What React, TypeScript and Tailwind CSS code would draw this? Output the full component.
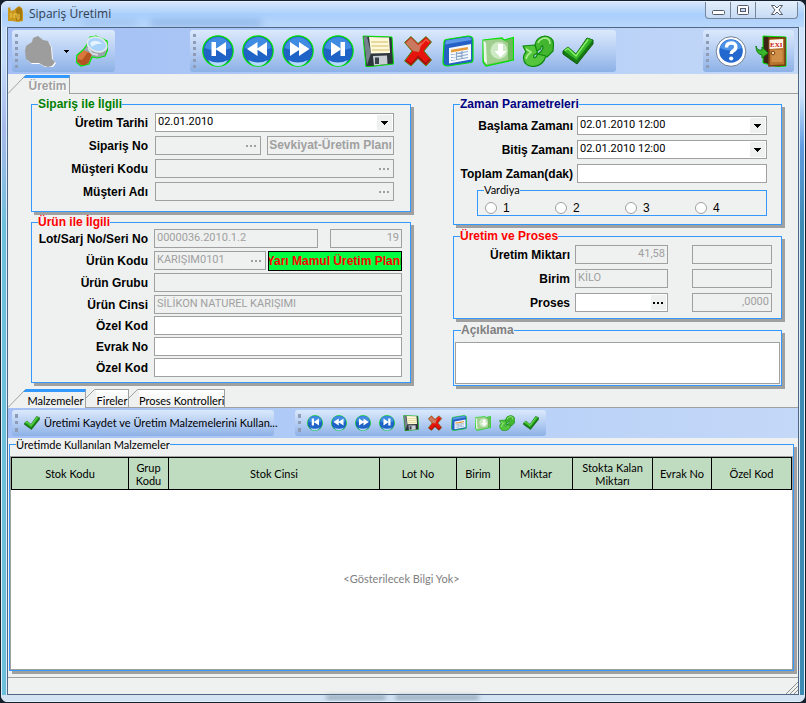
import React from 'react';

type IconProps = { className?: string };

const GREEN = '#00e400';

/* ---------- Icons ---------- */

const NavIcon: React.FC<IconProps & { kind: 'first' | 'prev' | 'next' | 'last' }> = ({ kind, className }) => (
  <svg viewBox="0 0 32 32" className={className} aria-hidden="true">
    <circle cx="16" cy="16" r="15.2" fill="#1b5bbf" stroke={GREEN} strokeWidth="1.2" />
    <circle cx="16" cy="16" r="14" fill="#1f63c6" />
    <path d="M2.5 13A13.8 13.8 0 0 1 29.500 13Q16 18 2.500 13Z" fill="#3f8ce2" />
    <path d="M6 25Q16 30 26 25Q22 31 16 31T6 25Z" fill="#b4dafa" />
    <g fill="#fff">
      {kind === 'first' && <path d="M9.500 7h4.500v14H9.500zM24 7v14L13.500 14z" />}
      {kind === 'prev' && <path d="M15.500 7v14L5 14zM25 7v14L14.500 14z" />}
      {kind === 'next' && <path d="M8 7v14L18.500 14zM17 7v14L27.500 14z" />}
      {kind === 'last' && <path d="M18.500 7h4.500v14h-4.500zM9 7v14L19.500 14z" />}
    </g>
  </svg>
);

const SaveIcon: React.FC<IconProps> = ({ className }) => (
  <svg viewBox="0 0 32 32" className={className} aria-hidden="true">
    <path d="M1 1L30 2L31.500 29L4 32Z" fill="#2f353d" stroke={GREEN} strokeWidth="1" />
    <path d="M1.500 1.500L5 1.500L9 18L5 30Z" fill="#76808c" />
    <path d="M7 2L27 2.500L28 18L9 18.500Z" fill="#fdf9d8" />
    <path d="M9 7h17M9.500 11h17M10 15h17" stroke="#e0cf8e" strokeWidth="1.300" />
    <path d="M11 21L25 20.500L25.500 29L12 30.500Z" fill="#c9ced4" />
    <path d="M13 22.500h4v6.500h-4z" fill="#39414b" />
  </svg>
);

const DeleteIcon: React.FC<IconProps> = ({ className }) => (
  <svg viewBox="0 0 32 32" className={className} aria-hidden="true">
    <path d="M2.500 7.500L9 1.500L16 8.500L24 1.500L29.500 7L22 16L29.500 25L24 31L16 23.500L9 31L2.500 26L10 16Z" fill="#e5140c" stroke="#4a8a1a" strokeWidth="1" />
    <path d="M3.500 8L9 3L16 10L20 7L17 17L11 16Z" fill="#c97a5e" />
    <path d="M16 23L23.500 30L28.500 25L27.500 23.500L23.500 27.500L16 20.500L9 28.500L4.500 25L3.500 26L9 30Z" fill="#a5100b" />
    <path d="M17 12L24 4.500L27 7" stroke="#f0604c" strokeWidth="1.200" fill="none" />
  </svg>
);

const FormIcon: React.FC<IconProps> = ({ className }) => (
  <svg viewBox="0 0 32 32" className={className} aria-hidden="true">
    <path d="M2 7Q2 5 4 4.500L26 1Q31 1 31 5V25Q31 27 29 27.500L6 31Q1 31 1 27Z" fill="#2560c4" stroke={GREEN} strokeWidth="1.200" />
    <path d="M4 5.500L26 2Q29 2 29.500 5L3 9.500Z" fill="#5b98ea" />
    <path d="M7 13L29 9V24.500L7 28.500Z" fill="#f4f9ff" />
    <path d="M9 14.800L26 12V14.500L9 17.500Z" fill="#e79c3c" />
    <path d="M9 19.500L26 16.500M9 22.500L26 19.500M9 25.500L26 22.500M14.500 17v8M20 16v8" stroke="#8ba6c9" strokeWidth="1.200" fill="none" />
  </svg>
);

const ImportIcon: React.FC<IconProps> = ({ className }) => (
  <svg viewBox="0 0 32 32" className={className} aria-hidden="true">
    <path d="M1 5L20 3L22 5L31.500 2.500V25L4 31L1 27Z" fill="#6db85a" stroke={GREEN} strokeWidth="1.200" />
    <path d="M1.500 5.500L19 4L26 8L26 25L5 29.500L2 26Z" fill="#a0cf90" />
    <path d="M1.500 5.500L4 8L5 29.500L2 26Z" fill="#e9f7e4" />
    <circle cx="17" cy="15.500" r="8.500" fill="#cdeac4" />
    <path d="M16 9h5v7h3.500L18.500 22.500L12.500 16H16z" fill="#fff" />
  </svg>
);

const RefreshIcon: React.FC<IconProps> = ({ className }) => (
  <svg viewBox="0 0 32 32" className={className} aria-hidden="true">
    <g stroke="#0c8a0c" strokeWidth="1.200" strokeLinejoin="round">
      <path d="M13 10Q14 2 23 1Q32 2 31.500 10L31 16L25 22L15 20L19 16.500Q22 13 20.500 10.500Q19 11 18.500 14L13 17Z" fill="#43b52f" />
      <path d="M1 11L13 10L15.500 18L12 20Q11 22 12.500 23Q15 22 15.500 19L24 21Q21 31 11 31.500Q2 31 1.500 23Q1 20 4 17Z" fill="#55c53d" />
    </g>
    <path d="M16 8Q18 3 24 3Q28 4 28 9M4 24Q5 20 9 17L4 14" stroke="#a7ee8d" strokeWidth="1.600" fill="none" />
  </svg>
);

const CheckIcon: React.FC<IconProps> = ({ className }) => (
  <svg viewBox="0 0 32 32" className={className} aria-hidden="true">
    <path d="M1 16L6 12L14 19L25 3L31 5V9L15 29L1 19Z" fill="#167914" stroke="#0b5c0a" strokeWidth="1" />
    <path d="M1.500 15.500L6 12L14 19L25.500 3L30.500 5L14.500 25Z" fill="#35b428" />
    <path d="M3 15.500L6 13.500L14 21L26 4.500" stroke="#8df06d" strokeWidth="1.300" fill="none" />
  </svg>
);

const HelpIcon: React.FC<IconProps> = ({ className }) => (
  <svg viewBox="0 0 32 32" className={className} aria-hidden="true">
    <circle cx="16" cy="16.500" r="14.800" fill="#fff" stroke="#6f7e91" strokeWidth="1" />
    <circle cx="16" cy="16" r="11.800" fill="#2368cf" />
    <path d="M5 13A11.500 11.500 0 0 1 27 13Q16 18 5 13Z" fill="#4f93e8" />
    <path d="M11.500 12.500Q11.500 8 16.200 8T20.800 12Q20.800 14.500 18 16Q16.200 17 16.200 19" stroke="#fff" strokeWidth="3.400" fill="none" />
    <circle cx="16.200" cy="23.500" r="2.100" fill="#fff" />
  </svg>
);

const ExitIcon: React.FC<IconProps> = ({ className }) => (
  <svg viewBox="0 0 32 32" className={className} aria-hidden="true">
    <path d="M8 1L31 2V31L23 32L8 28Z" fill="#3d2417" stroke={GREEN} strokeWidth="1" />
    <path d="M14 3L30 3V30L14 31Z" fill="#b8742f" stroke="#7d3f15" strokeWidth="1.500" />
    <path d="M16.500 15h11v12h-11z" fill="#cf8f48" />
    <path d="M14.500 5L28 4V13L14.500 14Z" fill="#fff6ee" />
    <text x="15" y="12" fontSize="7" fontWeight="bold" fill="#c91818" fontFamily="Liberation Serif, serif">EXI</text>
    <circle cx="18" cy="18" r="1.800" fill="#f5d9a0" stroke="#7d3f15" />
    <path d="M1 11Q2 16 7 15V12L13 18L7 23V20Q1 19 1 11Z" fill="#3bb52a" stroke="#0d800d" />
  </svg>
);

const SearchIcon: React.FC<IconProps> = ({ className }) => (
  <svg viewBox="0 0 32 32" className={className} aria-hidden="true">
    <path d="M10 11L14 2L20 1L31 6L32 14L29 21L22 23L16 22L13 29L5 31L0 27L1 20L7 15Z" fill="#9aa4ac" stroke={GREEN} strokeWidth="1.200" />
    <path d="M8 15.500L16 19L12.500 28L9 30H5L1 26.500L2 20.500Z" fill="#b4541f" />
    <path d="M8 15.500L12 17L6 25L2 24L2 20.500Z" fill="#d9783a" />
    <ellipse cx="21" cy="9.500" rx="10" ry="7" transform="rotate(18 21 9.500)" fill="#a9d3fa" stroke="#e4e9ed" strokeWidth="1.600" />
    <path d="M14 8Q19 3 27 9Q20 8 16 12Z" fill="#e4f3ff" />
    <path d="M12 13L16 18.500L22 20" stroke="#d5dade" strokeWidth="2" fill="none" />
  </svg>
);

const BlobIcon: React.FC<IconProps> = ({ className }) => (
  <svg viewBox="0 0 32 32" className={className} aria-hidden="true">
    <path d="M9 3L14 1L19 5L24 6L27 12L28 24L31 27L28 31L24 32L20 31L15 28L7 28L2 24L1 16L2 11L8 7Z" transform="translate(1 1)" fill="#fff" />
    <path d="M9 3L14 1L19 5L24 6L27 12L28 24L31 27L28 31L24 32L20 31L15 28L7 28L2 24L1 16L2 11L8 7Z" fill="#9d9d9d" />
  </svg>
);

const AppIcon: React.FC<IconProps> = ({ className }) => (
  <svg viewBox="0 0 16 16" className={className} aria-hidden="true">
    <path d="M0 2L2 1L3 5L6 4L8 2L11 0L14 2L15 6L15 15L10 16L4 15L0 15Z" fill="#c9981d" />
    <path d="M8 3L11 1L14 3V14L8 15Z" fill="#a8790f" />
    <path d="M3 7v5M6 8v4M6 8h3v4M11 8v5h-2" stroke="#f0cf55" fill="none" />
  </svg>
);

const recordIcons: { label: string; render: (cls: string) => React.ReactNode }[] = [
  { label: 'İlk', render: (c) => <NavIcon kind="first" className={c} /> },
  { label: 'Önceki', render: (c) => <NavIcon kind="prev" className={c} /> },
  { label: 'Sonraki', render: (c) => <NavIcon kind="next" className={c} /> },
  { label: 'Son', render: (c) => <NavIcon kind="last" className={c} /> },
  { label: 'Kaydet', render: (c) => <SaveIcon className={c} /> },
  { label: 'Sil', render: (c) => <DeleteIcon className={c} /> },
  { label: 'Form', render: (c) => <FormIcon className={c} /> },
  { label: 'Aktar', render: (c) => <ImportIcon className={c} /> },
  { label: 'Yenile', render: (c) => <RefreshIcon className={c} /> },
  { label: 'Onayla', render: (c) => <CheckIcon className={c} /> },
];

/* ---------- Shared pieces ---------- */

const Grip: React.FC = () => (
  <span className="w-[3px] self-stretch my-1 border-l-[3px] border-dotted border-[#8e9db5] shrink-0" />
);

const ToolGroup: React.FC<{ children: React.ReactNode; className: string }> = ({ children, className }) => (
  <div className={`flex items-center rounded-[3px] bg-linear-to-b from-[#dbe9fb] via-[#b6cef3] to-[#8db1e6] ${className}`}>
    <Grip />
    {children}
  </div>
);

const Group: React.FC<{ title: string; color: string; className: string; children: React.ReactNode }> = ({
  title,
  color,
  className,
  children,
}) => (
  <fieldset className={`min-w-0 border border-solid border-[#3399ff] bg-[#eff1f0] shadow-[3px_3px_0_#a0a0a0] ${className}`}>
    <legend className={`ml-[6px] h-[14px] leading-[14px] text-[12px] font-bold ${color}`}>{title}</legend>
    {children}
  </fieldset>
);

const Row: React.FC<{ id: string; label: string; labelClass: string; children: React.ReactNode }> = ({
  id,
  label,
  labelClass,
  children,
}) => (
  <div className="flex h-[19px] items-center">
    <label htmlFor={id} className={`shrink-0 text-right text-[12px] font-bold whitespace-nowrap ${labelClass}`}>
      {label}
    </label>
    {children}
  </div>
);

const box =
  "h-[19px] min-w-0 border border-[#a0a0a0] font-['Roboto',sans-serif] text-[11px] leading-[14px] px-[2px] pb-[2px] rounded-none";

const Field: React.FC<{ id?: string; label?: string; value?: string; disabled?: boolean; className: string }> = ({
  id,
  label,
  value,
  disabled,
  className,
}) => (
  <input
    id={id}
    aria-label={label}
    type="text"
    defaultValue={value}
    disabled={disabled}
    className={`${box} bg-white disabled:bg-[#eff1f0] disabled:text-[#a0a0a0] ${className}`}
  />
);

const LookupField: React.FC<{ id: string; value?: string; disabled?: boolean; className: string }> = ({
  id,
  value,
  disabled,
  className,
}) => (
  <div className={`flex h-[19px] min-w-0 border border-[#a0a0a0] ${disabled ? 'bg-[#eff1f0]' : 'bg-white'} ${className}`}>
    <input
      id={id}
      type="text"
      defaultValue={value}
      disabled={disabled}
      className="min-w-0 flex-1 px-[2px] pb-[2px] font-['Roboto',sans-serif] text-[11px] leading-[14px] disabled:text-[#a0a0a0]"
    />
    <button type="button" disabled={disabled} aria-label="Seç" className="m-px w-[15px] bg-[#eff1f0] text-black disabled:text-[#a0a0a0]">
      <svg viewBox="0 0 15 15" className="h-[15px] w-[15px]" fill="currentColor" shapeRendering="crispEdges">
        <path d="M2 7h2v2h-2zM6 7h2v2h-2zM10 7h2v2h-2z" />
      </svg>
    </button>
  </div>
);

const DateSelect: React.FC<{ id: string; value: string }> = ({ id, value }) => (
  <div className="relative flex-1 min-w-0">
    <select id={id} className={`${box} block w-full appearance-none bg-white`}>
      <option>{value}</option>
    </select>
    <svg viewBox="0 0 15 15" className="pointer-events-none absolute top-[2px] right-[2px] h-[15px] w-[15px] bg-[#eff1f0]" shapeRendering="crispEdges">
      <path d="M4 6h7v1h-1v1h-1v1h-1v1h-1v-1h-1v-1h-1v-1h-1z" />
    </svg>
  </div>
);

const Tab: React.FC<{ label: string; active?: boolean; muted?: boolean; className: string }> = ({
  label,
  active,
  muted,
  className,
}) => (
  <button type="button" role="tab" aria-selected={!!active} className="flex items-end whitespace-nowrap">
    <svg viewBox={active ? '0 0 18 19' : '0 0 10 19'} className={active ? 'h-[19px] w-[18px]' : 'h-[19px] w-[10px]'}>
      {active ? (
        <>
          <path d="M0 19L18 0V19Z" fill="#eff1f0" />
          <path d="M0 18.500L17.500 .5H18" stroke="#a0a0a0" fill="none" />
          <path d="M15 3L18 0V3Z" fill="#3399ff" />
        </>
      ) : (
        <path d="M0 9L8.500 .5H10M0 18.500H10" stroke="#a0a0a0" fill="none" />
      )}
    </svg>
    <span
      className={`h-[19px] border-r border-[#a0a0a0] text-center ${
        active ? 'border-t-[3px] border-t-[#3399ff] pt-px' : 'border-t border-b bg-linear-to-b from-white to-[#eff1f0] pt-[3px]'
      } ${muted ? 'text-[12px] font-bold text-[#a0a0a0] [text-shadow:1px_1px_0_#fff]' : "font-['Lato',sans-serif] text-[11px]"} leading-[15px] ${className}`}
    >
      {label}
    </span>
  </button>
);

const columns = [
  { title: 'Stok Kodu', width: 'w-[117px]' },
  { title: 'Grup Kodu', width: 'w-[40px]' },
  { title: 'Stok Cinsi', width: '' },
  { title: 'Lot No', width: 'w-[77px]' },
  { title: 'Birim', width: 'w-[43px]' },
  { title: 'Miktar', width: 'w-[73px]' },
  { title: 'Stokta Kalan Miktarı', width: 'w-[80px]' },
  { title: 'Evrak No', width: 'w-[59px]' },
  { title: 'Özel Kod', width: 'w-[80px]' },
];

/* ---------- Window parts ---------- */

const TitleBar: React.FC = () => (
  <header className="relative flex h-[25px] items-start justify-between overflow-hidden pl-[6px]">
    <div className="absolute top-[17px] left-[80px] h-2 w-14 rounded-full bg-[#6e95cf]/20 blur-[3px]" />
    <div className="absolute top-[17px] left-[148px] h-2 w-28 rounded-full bg-[#6e95cf]/40 blur-[3px]" />
    <div className="flex items-center gap-[5px] pt-[4px]">
      <AppIcon className="h-4 w-4" />
      <h1 className="font-['Open_Sans',sans-serif] text-[12px] leading-[16px] text-[#333d4d]">Sipariş Üretimi</h1>
    </div>
    <div className="mr-[6px] flex h-[17px] rounded-b-[4px] border border-t-0 border-[#75859c] bg-linear-to-b from-[#e3eefb] to-[#c6dbf5]">
      <button type="button" aria-label="Simge durumuna küçült" className="flex w-[25px] items-center justify-center border-r border-[#75859c]">
        <svg viewBox="0 0 13 12" className="h-3 w-[13px]"><rect x=".5" y="6.500" width="12" height="4" rx="1" fill="#fff" stroke="#555c68" /></svg>
      </button>
      <button type="button" aria-label="Ekranı kapla" className="flex w-[25px] items-center justify-center border-r border-[#75859c]">
        <svg viewBox="0 0 12 10" className="h-[10px] w-3"><rect x=".5" y=".5" width="11" height="9" rx="1" fill="#fff" stroke="#555c68" /><rect x="3.500" y="3.500" width="5" height="3" fill="#c9dcf4" stroke="#555c68" /></svg>
      </button>
      <button type="button" aria-label="Kapat" className="flex w-[41px] items-center justify-center">
        <svg viewBox="0 0 12 10" className="h-[10px] w-3"><path d="M.5.5h3L6 3L8.500.5h3L8 5L11.500 9.500h-3L6 7L3.500 9.500h-3L4 5Z" fill="#fff" stroke="#555c68" /></svg>
      </button>
    </div>
  </header>
);

const MainToolbar: React.FC = () => (
  <div className="flex h-[46px] items-center bg-linear-to-r from-[#a3bff5] via-[#b0ccf7] to-[#c4d8f8] px-1">
    <ToolGroup className="h-[42px] w-[103px] pl-[3px]">
      <button type="button" disabled aria-label="Yazdır" className="ml-[6px]">
        <BlobIcon className="h-8 w-8" />
      </button>
      <button type="button" aria-label="Seçenekler" className="ml-2 w-[5px]">
        <svg viewBox="0 0 5 3" className="h-[3px] w-[5px]" shapeRendering="crispEdges"><path d="M0 0h5v1h-1v1h-1v1h-1v-1h-1v-1h-1z" /></svg>
      </button>
      <button type="button" aria-label="Ara" className="ml-[7px]">
        <SearchIcon className="h-8 w-8" />
      </button>
    </ToolGroup>
    <ToolGroup className="ml-[75px] h-[42px] w-[426px] pl-[3px]">
      <div className="ml-[6px] flex gap-2">
        {recordIcons.map((item) => (
          <button key={item.label} type="button" aria-label={item.label}>
            {item.render('h-8 w-8')}
          </button>
        ))}
      </div>
    </ToolGroup>
    <ToolGroup className="ml-auto h-[42px] w-[91px] pl-[3px]">
      <div className="ml-[6px] flex gap-2">
        <button type="button" aria-label="Yardım"><HelpIcon className="h-8 w-8" /></button>
        <button type="button" aria-label="Çıkış"><ExitIcon className="h-8 w-8" /></button>
      </div>
    </ToolGroup>
  </div>
);

const OrderForm: React.FC = () => (
  <form className="grid grid-cols-[minmax(0,380fr)_minmax(0,329fr)] items-start gap-x-[42px] pt-[3px] pr-4 pb-[2px] pl-[23px]">
    <div className="flex flex-col gap-[3px]">
      <Group title="Sipariş ile İlgili" color="text-[#008000]" className="pr-4 pb-[10px]">
        <div className="flex flex-col gap-1 pt-[2px]">
          <Row id="tarih" label="Üretim Tarihi" labelClass="w-[116px] mr-[7px]">
            <DateSelect id="tarih" value="02.01.2010" />
          </Row>
          <Row id="siparis" label="Sipariş No" labelClass="w-[116px] mr-[7px]">
            <LookupField id="siparis" disabled className="mr-[6px] flex-1" />
            <button type="button" disabled className="h-[19px] w-[127px] overflow-hidden border border-[#a0a0a0] text-[12px] leading-[17px] font-bold whitespace-nowrap text-[#a0a0a0]">
              Sevkiyat-Üretim Planı
            </button>
          </Row>
          <Row id="musteriKodu" label="Müşteri Kodu" labelClass="w-[116px] mr-[7px]">
            <LookupField id="musteriKodu" disabled className="flex-1" />
          </Row>
          <Row id="musteriAdi" label="Müşteri Adı" labelClass="w-[116px] mr-[7px]">
            <LookupField id="musteriAdi" disabled className="flex-1" />
          </Row>
        </div>
      </Group>

      <Group title="Ürün ile İlgili" color="text-[#ff0000]" className="pr-2 pb-[5px]">
        <div className="flex flex-col gap-[3px]">
          <Row id="lot" label="Lot/Sarj No/Seri No" labelClass="w-[116px] mr-[6px]">
            <Field id="lot" value="0000036.2010.1.2" disabled className="mr-3 flex-1" />
            <Field label="Seri" value="19" disabled className="w-[72px] text-right" />
          </Row>
          <Row id="urunKodu" label="Ürün Kodu" labelClass="w-[116px] mr-[6px]">
            <LookupField id="urunKodu" value="KARIŞIM0101" disabled className="mr-[2px] flex-1" />
            <button type="button" className="flex h-5 w-[134px] items-center justify-center overflow-hidden border border-black bg-[#00ff40] text-[12px] font-bold whitespace-nowrap text-[#ff0000]">
              Yarı Mamul Üretim Planı
            </button>
          </Row>
          <Row id="urunGrubu" label="Ürün Grubu" labelClass="w-[116px] mr-[6px]">
            <Field id="urunGrubu" disabled className="flex-1" />
          </Row>
        </div>
        <div className="mt-[3px] flex flex-col gap-[2px]">
          <Row id="urunCinsi" label="Ürün Cinsi" labelClass="w-[116px] mr-[6px]">
            <Field id="urunCinsi" value="SİLİKON NATUREL KARIŞIMI" disabled className="flex-1" />
          </Row>
          <Row id="ozelKod1" label="Özel Kod" labelClass="w-[116px] mr-[6px]">
            <Field id="ozelKod1" className="flex-1" />
          </Row>
          <Row id="evrakNo" label="Evrak No" labelClass="w-[116px] mr-[6px]">
            <Field id="evrakNo" className="flex-1" />
          </Row>
          <Row id="ozelKod2" label="Özel Kod" labelClass="w-[116px] mr-[6px]">
            <Field id="ozelKod2" className="flex-1" />
          </Row>
        </div>
      </Group>
    </div>

    <div className="flex flex-col gap-1">
      <Group title="Zaman Parametreleri" color="text-[#000080]" className="pr-[14px] pb-2">
        <div className="flex flex-col gap-[5px] pt-[5px]">
          <Row id="baslama" label="Başlama Zamanı" labelClass="w-[119px] mr-1">
            <DateSelect id="baslama" value="02.01.2010 12:00" />
          </Row>
          <Row id="bitis" label="Bitiş Zamanı" labelClass="w-[119px] mr-1">
            <DateSelect id="bitis" value="02.01.2010 12:00" />
          </Row>
          <Row id="toplam" label="Toplam Zaman(dak)" labelClass="w-[119px] mr-1">
            <Field id="toplam" className="flex-1" />
          </Row>
        </div>
        <fieldset className="ml-[23px] min-w-0 border border-solid border-[#3399ff]">
          <legend className="ml-[6px] h-[14px] font-['Lato',sans-serif] text-[11px] leading-[14px]">Vardiya</legend>
          <div className="flex h-[18px] items-end pl-[7px]">
            {['1', '2', '3', '4'].map((shift) => (
              <label key={shift} className="flex w-[70px] items-center gap-[6px] text-[12px] leading-[14px]">
                <input type="radio" name="vardiya" value={shift} className="h-3 w-3 appearance-none rounded-full border border-[#a0a0a0] bg-white checked:bg-black" />
                {shift}
              </label>
            ))}
          </div>
        </fieldset>
      </Group>

      <Group title="Üretim ve Proses" color="text-[#ff0000]" className="pr-[9px] pb-[6px]">
        <div className="flex flex-col gap-[5px] pt-[2px]">
          <Row id="miktar" label="Üretim Miktarı" labelClass="w-[116px] mr-[5px]">
            <Field id="miktar" value="41,58" disabled className="mr-6 flex-1 text-right" />
            <Field label="Miktar 2" disabled className="w-20" />
          </Row>
          <Row id="birim" label="Birim" labelClass="w-[116px] mr-[5px]">
            <Field id="birim" value="KİLO" disabled className="mr-6 flex-1" />
            <Field label="Birim 2" disabled className="w-20" />
          </Row>
          <Row id="proses" label="Proses" labelClass="w-[116px] mr-[5px]">
            <LookupField id="proses" className="mr-6 flex-1" />
            <Field label="Proses miktarı" value=",0000" disabled className="w-20 text-right" />
          </Row>
        </div>
      </Group>

      <Group title="Açıklama" color="text-[#808080]" className="px-px pb-px">
        <textarea aria-label="Açıklama" className="mt-[5px] block h-[42px] w-full resize-none border border-[#a0a0a0] bg-white px-[2px] text-[11px]" />
      </Group>
    </div>
  </form>
);

const MaterialsToolbar: React.FC = () => (
  <div className="flex h-[30px] items-center bg-linear-to-r from-[#a3bff5] via-[#b4cff7] to-[#c4d8f8] px-1">
    <ToolGroup className="h-[26px] w-[262px] pl-[3px]">
      <button type="button" className="ml-[6px] flex min-w-0 items-center gap-1 font-['Lato',sans-serif] text-[11px] whitespace-nowrap">
        <CheckIcon className="h-4 w-4 shrink-0" />
        Üretimi Kaydet ve Üretim Malzemelerini Kullan...
      </button>
    </ToolGroup>
    <ToolGroup className="ml-[21px] h-[26px] w-[251px] pl-[3px]">
      <div className="ml-[6px] flex gap-2">
        {recordIcons.map((item) => (
          <button key={item.label} type="button" aria-label={item.label}>
            {item.render('h-4 w-4')}
          </button>
        ))}
      </div>
    </ToolGroup>
  </div>
);

const MaterialsGrid: React.FC = () => (
  <section className="mt-[6px] mr-[4px] ml-px flex flex-1 flex-col border border-[#3399ff] shadow-[3px_3px_0_#a0a0a0] font-['Lato',sans-serif]">
    <h2 className="-mt-[7px] ml-[6px] self-start bg-[#eff1f0] text-[11px] leading-[14px]">Üretimde Kullanılan Malzemeler</h2>
    <div className="mt-[4px] flex flex-1 flex-col border border-[#a0a0a0] bg-white">
      <table className="w-full table-fixed border-collapse text-[11px] leading-[13px]">
        <thead>
          <tr className="h-[32px] bg-[#c0dcc0]">
            {columns.map((col) => (
              <th key={col.title} className={`border border-black px-1 font-normal ${col.width}`}>
                {col.title}
              </th>
            ))}
          </tr>
        </thead>
      </table>
      <p className="flex flex-1 items-center justify-center text-[11px] text-[#808080]">&lt;Gösterilecek Bilgi Yok&gt;</p>
    </div>
  </section>
);

export default function App() {
  return (
    <div className="flex min-h-screen flex-col bg-[#16202c] font-['Liberation_Sans',Arial,sans-serif] text-black">
      <div className="m-px flex flex-1 flex-col overflow-hidden rounded-[6px] border border-[#e2effc] bg-[#d3e3f4]">
        <div className="bg-linear-to-b from-[#d6e6fa] via-[#a9cffc] to-[#b9d7fb]">
          <TitleBar />
        </div>
        <div className="flex flex-1">
          <div className="w-[5px] border-r border-[#d9ecf8] bg-linear-to-b from-[#c3dbf8] from-5% via-[#a6b9ec] via-15% to-[#6cc0dc] to-30%" />
          <main className="flex min-w-0 flex-1 flex-col border border-[#4f6784] bg-[#eff1f0]">
            <MainToolbar />
            <div role="tablist" className="flex h-5 items-end">
              <Tab label="Üretim" active muted className="w-[44px]" />
              <span className="h-px flex-1 bg-[#a0a0a0]" />
            </div>
            <OrderForm />
            <div role="tablist" className="flex h-[20px] items-end">
              <Tab label="Malzemeler" active className="w-[60px]" />
              <Tab label="Fireler" className="w-[33px]" />
              <Tab label="Proses Kontrolleri" className="w-[86px]" />
              <span className="h-px flex-1 bg-[#a0a0a0]" />
            </div>
            <MaterialsToolbar />
            <MaterialsGrid />
            <footer className="mt-[6px] flex h-[17px] items-end justify-end border-t border-[#a0a0a0]">
              <svg viewBox="0 0 12 12" className="h-3 w-3">
                <path d="M0 12L12 0M4 12L12 4M8 12L12 8" stroke="#8f8f8f" fill="none" />
              </svg>
            </footer>
          </main>
          <div className="w-[5px] border-l border-[#d9ecf8] bg-linear-to-b from-[#cfe4fb] from-10% via-[#5f9be0] via-18% to-[#3b8bb2] to-30%" />
        </div>
        <div className="relative h-[6px] bg-[#d3e3f4]">
          <div className="absolute top-0 left-[324px] h-[5px] w-[60px] rounded-full bg-[#6f8799]/60 blur-[2px]" />
          <div className="absolute top-0 left-[393px] h-[5px] w-[84px] rounded-full bg-[#6f8799]/60 blur-[2px]" />
        </div>
      </div>
    </div>
  );
}
